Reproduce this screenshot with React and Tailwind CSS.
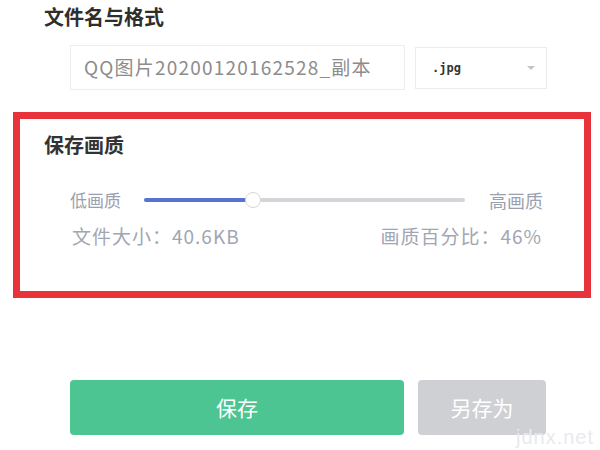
export default function App() {
  const percent = 34;

  return (
    <div className="relative h-[450px] w-[600px] overflow-hidden bg-white font-['Noto_Sans_CJK_SC','Noto_Sans',sans-serif]">
      <div className="pl-[44px] pt-[3px] text-[20px] font-bold leading-[28px] text-[#2e2e2e]">
        文件名与格式
      </div>

      <div className="mt-[14px] flex items-center pl-[70px]">
        <div className="flex h-[45px] w-[335px] items-center border border-[#ececec] pl-[13px] text-[19px] tracking-[1.2px] text-[#8c8c8c]">
          QQ图片20200120162528_副本
        </div>
        <div className="ml-[10px] flex h-[42px] w-[132px] items-center justify-between border border-[#ececec] pl-[16px] pr-[10px]">
          <span className="font-['DejaVu_Sans_Mono',monospace] text-[12px] font-bold text-[#333]">.jpg</span>
          <svg width="10" height="6" viewBox="0 0 10 6">
            <path d="M1 1 L5 5 L9 1 Z" fill="#c4c4c4" />
          </svg>
        </div>
      </div>

      <div className="ml-[13px] mt-[22px] h-[186px] w-[578px] border-[7px] border-[#e9333b]">
        <div className="pl-[24px] pt-[12px] text-[20px] font-bold leading-[28px] text-[#333]">
          保存画质
        </div>

        <div className="mt-[30px] flex items-center pl-[50px]">
          <span className="text-[17px] leading-[22px] text-[#9aa0b0]">低画质</span>
          <div className="relative ml-[23px] flex h-[16px] w-[321px] items-center">
            <div className="h-[4px] w-full rounded-full bg-[#d4d5d9]">
              <div className="h-full rounded-full bg-[#5872cf]" style={{ width: `${percent}%` }} />
            </div>
            <div
              className="absolute top-0 h-[16px] w-[16px] -translate-x-1/2 rounded-full border border-[#d8d8d8] bg-white"
              style={{ left: `${percent}%` }}
            />
          </div>
          <span className="ml-[24px] text-[18px] leading-[22px] text-[#9aa0b0]">高画质</span>
        </div>

        <div className="mt-[13px] flex items-center justify-between pl-[52px] pr-[42px] text-[19px] leading-[24px] tracking-[1px] text-[#a2a6b2]">
          <span>文件大小：40.6KB</span>
          <span>画质百分比：46%</span>
        </div>
      </div>

      <div className="mt-[82px] flex pl-[70px]">
        <button className="h-[55px] w-[334px] rounded-[4px] bg-[#4cc593] text-[21px] text-white">
          保存
        </button>
        <button className="ml-[14px] h-[55px] w-[128px] rounded-[4px] bg-[#cfd0d4] text-[21px] text-white">
          另存为
        </button>
      </div>

      <div className="absolute bottom-[-2px] right-[6px] font-['Liberation_Sans',sans-serif] text-[20px] tracking-[1px] text-[#e8eaee]">
        jdnx.net
      </div>
    </div>
  );
}
